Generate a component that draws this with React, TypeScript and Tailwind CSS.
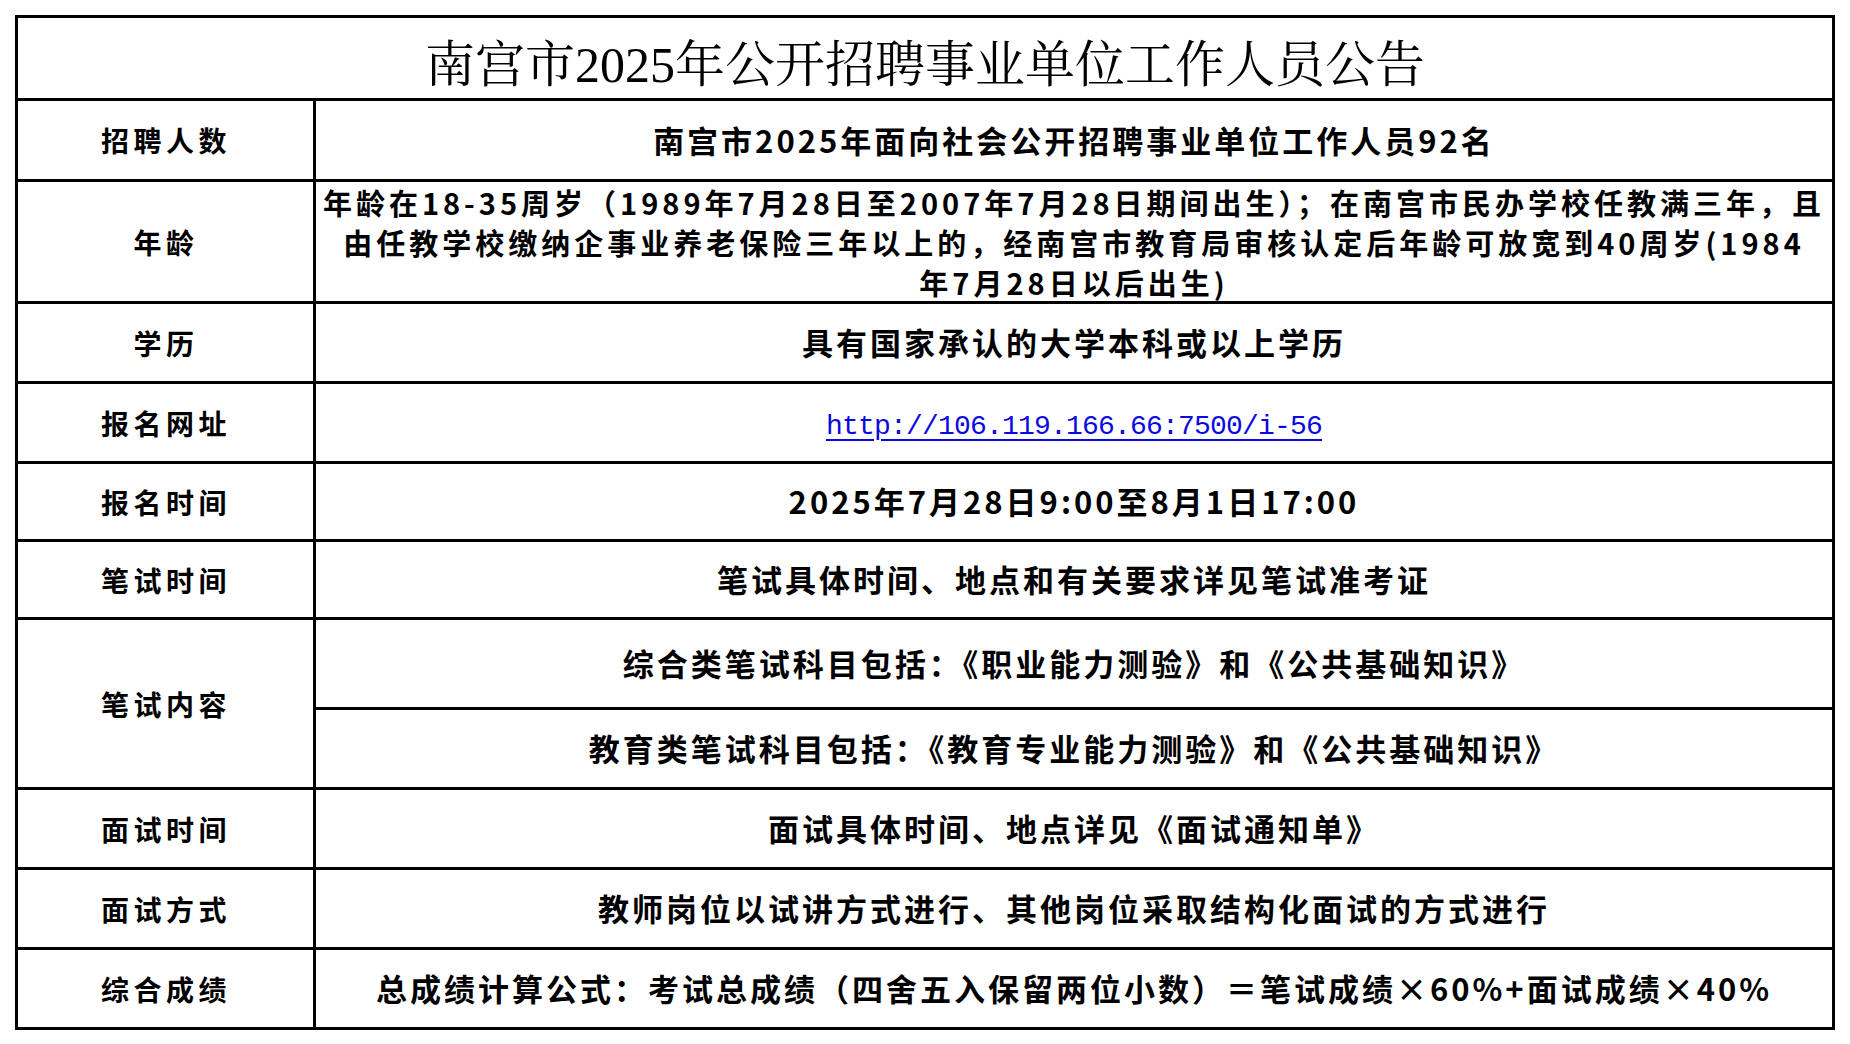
const SANS = "font-['Noto_Sans_CJK_SC','Noto_Sans',sans-serif]";

type Row = {
  label: string;
  height: string;
  content: React.ReactNode;
};

const rows: Row[] = [
  { label: "招聘人数", height: "h-[81px]", content: "南宫市2025年面向社会公开招聘事业单位工作人员92名" },
  {
    label: "年龄",
    height: "h-[122px]",
    content: (
      <div className="text-[29px] leading-[40px] tracking-[4px] whitespace-nowrap text-center">
        年龄在18-35周岁（1989年7月28日至2007年7月28日期间出生）；在南宫市民办学校任教满三年，且
        <br />
        由任教学校缴纳企事业养老保险三年以上的，经南宫市教育局审核认定后年龄可放宽到40周岁(1984
        <br />
        年7月28日以后出生)
      </div>
    ),
  },
  { label: "学历", height: "h-[80px]", content: "具有国家承认的大学本科或以上学历" },
  {
    label: "报名网址",
    height: "h-[80px]",
    content: (
      <a className="pt-[8px] font-['Liberation_Mono',monospace] font-normal text-[28px] tracking-[-0.8px] text-[#0a0ae0] underline underline-offset-[5px] decoration-[2px]">
        http://106.119.166.66:7500/i-56
      </a>
    ),
  },
  { label: "报名时间", height: "h-[78px]", content: "2025年7月28日9:00至8月1日17:00" },
  { label: "笔试时间", height: "h-[78px]", content: "笔试具体时间、地点和有关要求详见笔试准考证" },
];

const rowsAfter: Row[] = [
  { label: "面试时间", height: "h-[80px]", content: "面试具体时间、地点详见《面试通知单》" },
  { label: "面试方式", height: "h-[80px]", content: "教师岗位以试讲方式进行、其他岗位采取结构化面试的方式进行" },
  {
    label: "综合成绩",
    height: "h-[80px]",
    content: "总成绩计算公式：考试总成绩（四舍五入保留两位小数）＝笔试成绩×60%+面试成绩×40%",
  },
];

function Label({ text }: { text: string }) {
  return (
    <div className="w-[298px] shrink-0 border-r-[3px] border-black flex items-center justify-center text-[28px] font-bold tracking-[4.5px] pl-[1px]">
      {text}
    </div>
  );
}

function Content({ children }: { children: React.ReactNode }) {
  return (
    <div className="flex-1 flex items-center justify-center text-[31px] font-bold tracking-[3px] whitespace-nowrap">
      {children}
    </div>
  );
}

function TableRow({ row }: { row: Row }) {
  return (
    <div className={`flex border-b-[3px] border-black ${row.height}`}>
      <Label text={row.label} />
      <Content>{row.content}</Content>
    </div>
  );
}

export default function App() {
  return (
    <div className={`min-h-screen bg-white text-black pl-[15px] pt-[15px] ${SANS}`}>
      <div className="w-[1820px] border-t-[3px] border-l-[3px] border-r-[3px] border-black">
        <div className="h-[83px] border-b-[3px] border-black flex items-center justify-center pt-[14px]">
          <h1 className="text-[50px] font-normal font-['Liberation_Serif','Noto_Serif_CJK_SC','Noto_Sans_CJK_SC',serif] leading-none">
            南宫市2025年公开招聘事业单位工作人员公告
          </h1>
        </div>

        {rows.map((row) => (
          <TableRow key={row.label} row={row} />
        ))}

        <div className="flex h-[170px] border-b-[3px] border-black">
          <Label text="笔试内容" />
          <div className="flex-1 flex flex-col">
            <div className="h-[90px] border-b-[3px] border-black flex items-center justify-center text-[31px] font-bold tracking-[3px] whitespace-nowrap">
              综合类笔试科目包括：《职业能力测验》和《公共基础知识》
            </div>
            <div className="flex-1 flex items-center justify-center text-[31px] font-bold tracking-[3px] whitespace-nowrap">
              教育类笔试科目包括：《教育专业能力测验》和《公共基础知识》
            </div>
          </div>
        </div>

        {rowsAfter.map((row) => (
          <TableRow key={row.label} row={row} />
        ))}
      </div>
    </div>
  );
}
